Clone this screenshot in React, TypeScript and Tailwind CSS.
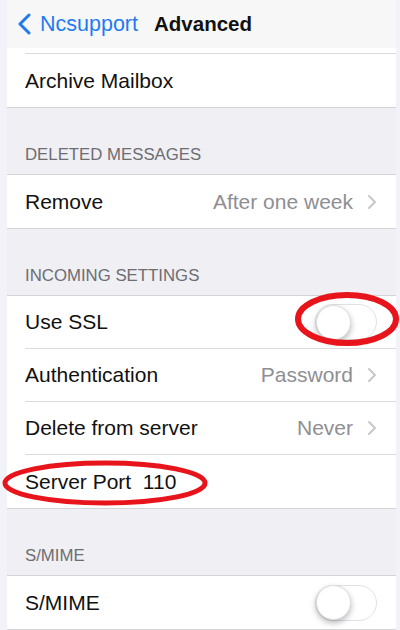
import React from "react";

const font = { fontFamily: '"Liberation Sans", Arial, sans-serif' };

const Chevron = () => (
  <svg width="10" height="16" viewBox="0 0 10 16" className="ml-[14px]">
    <path d="M2 2 L8 8 L2 14" fill="none" stroke="#c7c7cc" strokeWidth="2" strokeLinecap="round" strokeLinejoin="round" />
  </svg>
);

const Toggle = () => (
  <div className="w-[62px] h-[36px] rounded-full border border-[#e1e1e6] bg-white flex items-center">
    <div className="w-[35px] h-[35px] rounded-full bg-white border border-[#dcdcdc] shadow-[0_3px_6px_rgba(0,0,0,0.28)]" />
  </div>
);

const Row = ({ label, value, toggle, chevron, last }: { label: string; value?: string; toggle?: boolean; chevron?: boolean; last?: boolean }) => (
  <div className="pl-[18px]">
    <div className={`h-[53px] flex items-center pr-[19px] ${last ? "" : "border-b border-[#dcdce0]"}`}>
      <span className="text-[21px] text-[#111] flex-1 whitespace-pre">{label}</span>
      {value && <span className="text-[21px] text-[#8e8e93]">{value}</span>}
      {chevron && <Chevron />}
      {toggle && <Toggle />}
    </div>
  </div>
);

const Header = ({ title }: { title: string }) => (
  <div className="h-[66px] flex items-end pl-[18px] pb-[9px]">
    <span className="text-[16.8px] leading-[20px] text-[#6d6d72]">{title}</span>
  </div>
);

const Group = ({ children }: { children: React.ReactNode }) => (
  <div className="bg-white border-y border-[#d4d4d8]">{children}</div>
);

export default function App() {
  return (
    <div className="relative w-[400px] h-[630px] overflow-hidden bg-[#f1f3f8]" style={font}>
      <div className="ml-[7px] mr-[4px] h-full bg-[#efeff4]">
        <div className="h-[48px] bg-[#f7f7f8] flex items-center">
          <svg width="16" height="22" viewBox="0 0 16 22" className="ml-[10px]">
            <path d="M12 2 L3 11 L12 20" fill="none" stroke="#1f7cf0" strokeWidth="3" strokeLinecap="round" strokeLinejoin="round" />
          </svg>
          <span className="ml-[7px] text-[21.5px] text-[#1f7cf0]">Ncsupport</span>
          <span className="ml-[16px] text-[20.5px] font-bold text-[#111]">Advanced</span>
        </div>
        <div className="bg-white border-b border-[#d4d4d8]">
          <div className="pl-[18px]">
            <div className="h-[6px] border-b border-[#dcdce0]" />
          </div>
          <Row label="Archive Mailbox" last />
        </div>
        <Header title="DELETED MESSAGES" />
        <Group>
          <Row label="Remove" value="After one week" chevron last />
        </Group>
        <Header title="INCOMING SETTINGS" />
        <Group>
          <Row label="Use SSL" toggle />
          <Row label="Authentication" value="Password" chevron />
          <Row label="Delete from server" value="Never" chevron />
          <Row label="Server Port  110" last />
        </Group>
        <Header title="S/MIME" />
        <Group>
          <Row label="S/MIME" toggle last />
        </Group>
      </div>
      <svg className="absolute inset-0 pointer-events-none" width="400" height="630">
        <ellipse cx="347" cy="319" rx="49" ry="24" fill="none" stroke="#e8141b" strokeWidth="6" />
        <ellipse cx="105" cy="483" rx="100" ry="20" fill="none" stroke="#e8141b" strokeWidth="5" />
      </svg>
    </div>
  );
}
